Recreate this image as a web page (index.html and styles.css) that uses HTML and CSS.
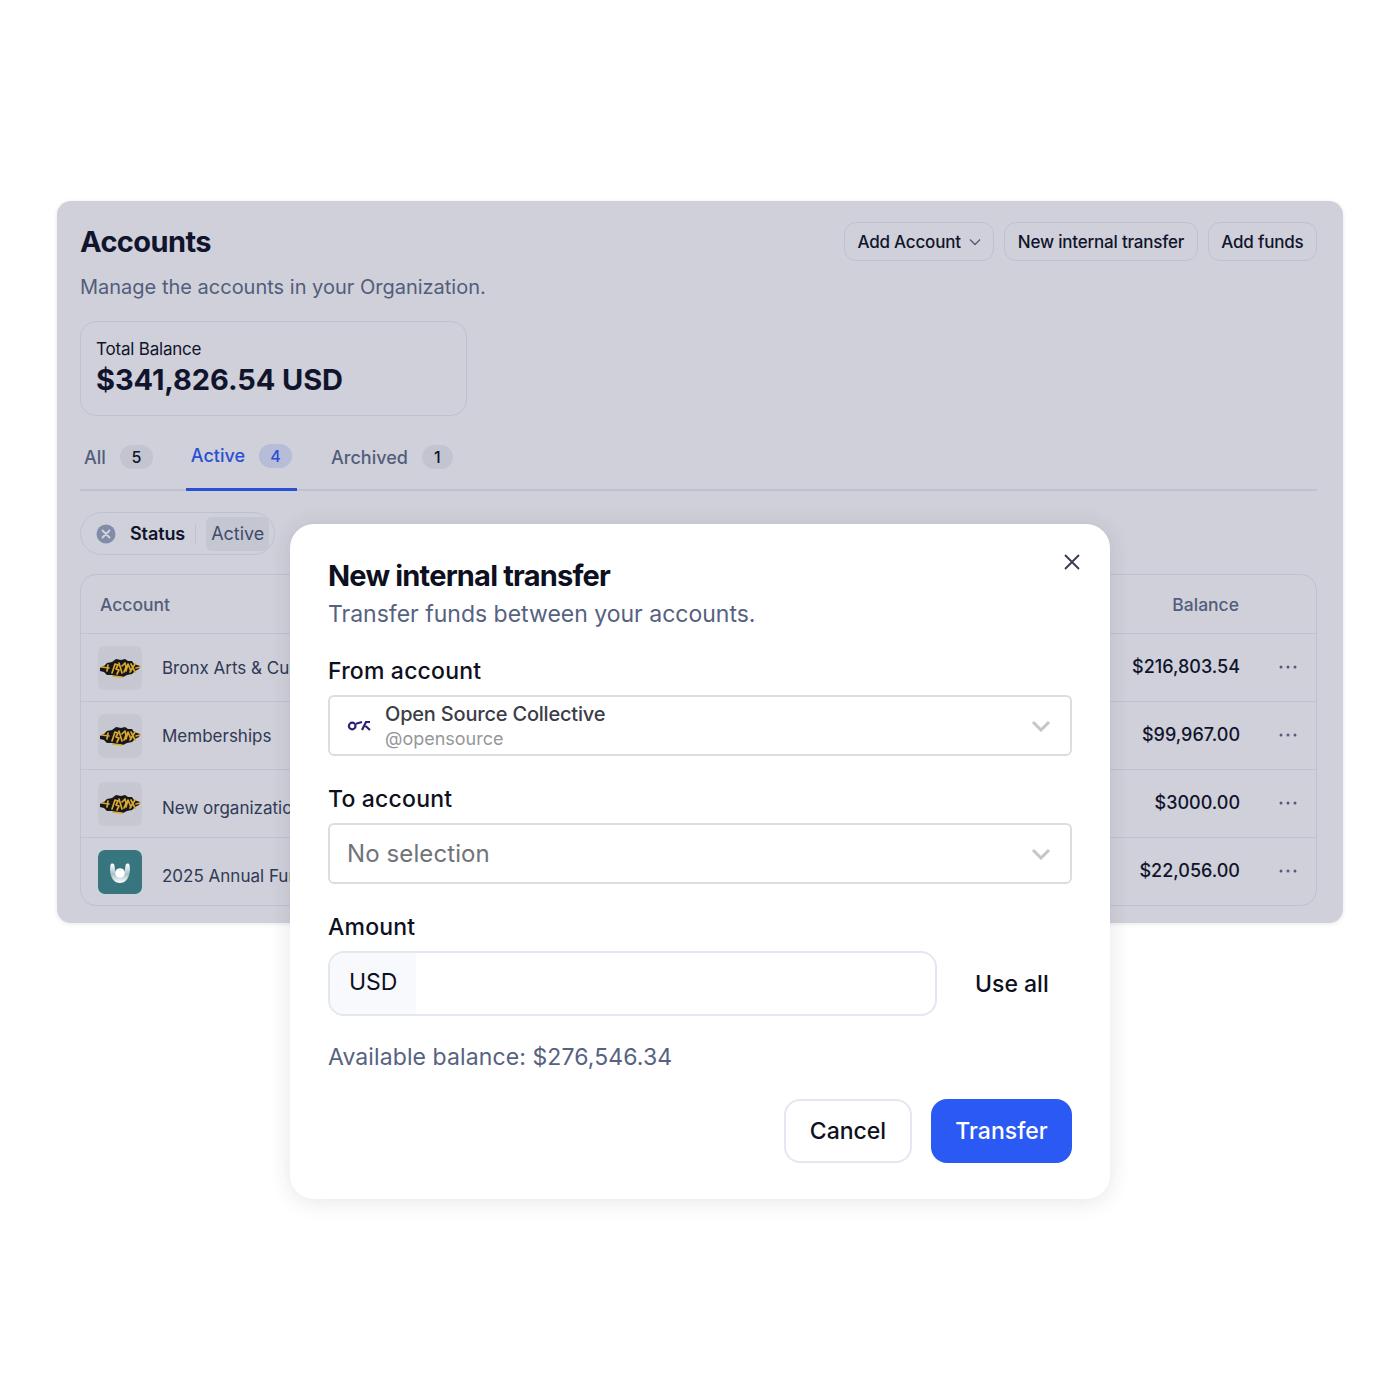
FILE: index.html
```html
<!DOCTYPE html>
<html lang="en">
<head>
    <meta charset="UTF-8">
    <title>New internal transfer</title>
    <link rel="stylesheet" href="styles.css">
</head>
<body>
    <svg class="defs" width="0" height="0">
        <defs>
            <linearGradient id="fade" x1="0" y1="0" x2="0" y2="1">
                <stop offset="0" stop-color="#ffffff"/>
                <stop offset="0.55" stop-color="#a9c3c8"/>
                <stop offset="1" stop-color="#ffffff"/>
            </linearGradient>
            <symbol id="bronx" viewBox="0 0 44 44">
                <path d="M2 22l4-2 3-3 5-1 4-3 5 1 4-1 3 2 4 0 2 3 6 2-1 3-4 2-3 3-5 1-4 2-6 0-5-2-5 0-3-3-4-1z" fill="#17161b"/>
                <path d="M4 21l7 1M10 19l-1 6M14 27l3-9 3 1-2 4 3 1-2 4M21 17l3 10M24 20l3-3 1 4-2 5M28 25l2-7 3 7M33 18l4 8M37 18l-5 8M38 22l4-1M15 30l9 1" fill="none" stroke="#d9a82e" stroke-width="1.7" stroke-linecap="round" stroke-linejoin="round"/>
            </symbol>
            <symbol id="dots" viewBox="0 0 18 4">
                <circle cx="2" cy="2" r="1.5"/>
                <circle cx="9" cy="2" r="1.5"/>
                <circle cx="16" cy="2" r="1.5"/>
            </symbol>
        </defs>
    </svg>

    <main class="panel">
        <header class="top">
            <h1>Accounts</h1>
            <div class="actions">
                <button class="btn">Add Account
                    <svg class="btn-chev" viewBox="0 0 12 8"><path d="M1 1.5l5 5 5-5"/></svg>
                </button>
                <button class="btn">New internal transfer</button>
                <button class="btn">Add funds</button>
            </div>
        </header>
        <p class="lead">Manage the accounts in your Organization.</p>

        <section class="total">
            <div class="total-label">Total Balance</div>
            <div class="total-value">$341,826.54 USD</div>
        </section>

        <nav class="tabs">
            <a class="tab tab-all">All <span class="count">5</span></a>
            <a class="tab tab-active">Active <span class="count">4</span></a>
            <a class="tab tab-archived">Archived <span class="count">1</span></a>
        </nav>

        <div class="filter">
            <svg class="filter-x" viewBox="0 0 20 20">
                <circle cx="10" cy="10" r="9.5" fill="#818ca8"/>
                <path d="M6.5 6.5l7 7M13.5 6.5l-7 7" stroke="#d3d5de" stroke-width="1.8" stroke-linecap="round"/>
            </svg>
            <span class="filter-name">Status</span>
            <span class="filter-sep"></span>
            <span class="filter-value">Active</span>
        </div>

        <section class="table">
            <div class="row row-head">
                <span>Account</span>
                <span class="head-balance">Balance</span>
            </div>
            <div class="row">
                <svg class="logo"><use href="#bronx"/></svg>
                <span class="name">Bronx Arts &amp; Culture</span>
                <span class="amount">$216,803.54</span>
                <svg class="more"><use href="#dots"/></svg>
            </div>
            <div class="row">
                <svg class="logo"><use href="#bronx"/></svg>
                <span class="name">Memberships</span>
                <span class="amount">$99,967.00</span>
                <svg class="more"><use href="#dots"/></svg>
            </div>
            <div class="row">
                <svg class="logo"><use href="#bronx"/></svg>
                <span class="name name-low">New organization</span>
                <span class="amount">$3000.00</span>
                <svg class="more"><use href="#dots"/></svg>
            </div>
            <div class="row">
                <svg class="logo logo-teal" viewBox="0 0 44 44">
                    <path d="M12.5 15c-1.500 7 1 18 9.500 18s11-11 9.500-18c-.5-2-3.500-2-4 .5-.5 3-.5 10-5.500 10s-5-7-5.500-10c-.5-2.500-3.500-2.500-4-.5z" fill="url(#fade)"/>
                    <circle cx="22" cy="23" r="4.800" fill="#fff"/>
                </svg>
                <span class="name name-low">2025 Annual Fund</span>
                <span class="amount">$22,056.00</span>
                <svg class="more"><use href="#dots"/></svg>
            </div>
        </section>
    </main>

    <div class="modal">
        <button class="close" aria-label="Close">
            <svg viewBox="0 0 16 16"><path d="M1 1l14 14M15 1L1 15"/></svg>
        </button>
        <h2>New internal transfer</h2>
        <p class="sub">Transfer funds between your accounts.</p>

        <label class="field-label">From account</label>
        <div class="select">
            <svg class="osc" viewBox="0 0 24 12">
                <circle cx="5.200" cy="6" r="3.300"/>
                <path d="M9 3.800l6-1.800M15 10l4-8 4 0M18.500 6l4.500 4"/>
            </svg>
            <div class="select-text">
                <div class="select-name">Open Source Collective</div>
                <div class="select-slug">@opensource</div>
            </div>
            <svg class="chev" viewBox="0 0 20 12"><path d="M2 2l8 8 8-8"/></svg>
        </div>

        <label class="field-label">To account</label>
        <div class="select">
            <span class="placeholder">No selection</span>
            <svg class="chev" viewBox="0 0 20 12"><path d="M2 2l8 8 8-8"/></svg>
        </div>

        <label class="field-label">Amount</label>
        <div class="amount-row">
            <div class="amount-input">
                <span class="currency">USD</span>
            </div>
            <button class="use-all">Use all</button>
        </div>

        <p class="available">Available balance: $276,546.34</p>

        <div class="footer">
            <button class="cancel">Cancel</button>
            <button class="transfer">Transfer</button>
        </div>
    </div>
</body>
</html>
```

FILE: styles.css
```css
* {
    box-sizing: border-box;
}

body {
    margin: 0;
    padding: 201px 57px 0;
    min-height: 1400px;
    background: #fff;
    font-family: Inter, "Liberation Sans", sans-serif;
    color: #10142c;
    position: relative;
}

.defs {
    position: absolute;
}

button {
    font-family: inherit;
}

.panel {
    height: 722px;
    padding: 21px 26px 0 23px;
    background: #cfd0d9;
    border-radius: 14px;
    box-shadow: 0 1px 4px rgba(60, 60, 90, 0.12);
}

.top {
    display: flex;
    justify-content: space-between;
    align-items: center;
}

h1 {
    margin: 0;
    font-size: 29px;
    font-weight: 700;
    letter-spacing: -0.6px;
    color: #10142c;
}

.actions {
    display: flex;
    gap: 10px;
}

.btn {
    height: 39px;
    padding: 0 12.500px;
    display: flex;
    align-items: center;
    gap: 8px;
    background: none;
    border: 1px solid #bfc1d0;
    border-radius: 12px;
    font-size: 17px;
    font-weight: 500;
    letter-spacing: -0.2px;
    color: #10142c;
}

.btn-chev {
    width: 12px;
    height: 8px;
    fill: none;
    stroke: #545d78;
    stroke-width: 1.4;
}

.lead {
    margin: 13px 0 0;
    font-size: 20px;
    line-height: 26px;
    color: #535d7c;
}

.total {
    width: 387px;
    height: 95px;
    margin-top: 21px;
    padding: 17px 15px 0;
    border: 1px solid #bfc1d0;
    border-radius: 16px;
}

.total-label {
    font-size: 17px;
    line-height: 20px;
    letter-spacing: -0.2px;
    color: #10142c;
}

.total-value {
    margin-top: 3px;
    font-size: 29px;
    line-height: 36px;
    font-weight: 700;
    letter-spacing: -0.1px;
}

.tabs {
    display: flex;
    margin-top: 20px;
    height: 55px;
    border-bottom: 2px solid #bfc1d0;
}

.tab {
    display: flex;
    align-items: center;
    gap: 14px;
    height: 55px;
    padding: 0 5px 13px;
    font-size: 18px;
    font-weight: 500;
    color: #535d7c;
}

.tab-all {
    margin-right: 28px;
    padding-left: 4px;
}

.tab-active {
    margin-right: 29px;
    color: #2a4fd2;
    border-bottom: 3px solid #2a4fd2;
}

.count {
    min-width: 33px;
    height: 24px;
    padding: 0 10px;
    display: flex;
    align-items: center;
    justify-content: center;
    border-radius: 12px;
    background: #c2c4d0;
    font-size: 16px;
    color: #10142c;
}

.tab-active .count {
    background: #b7bcd9;
    color: #2a4fd2;
}

.tab-archived .count {
    min-width: 31px;
}

.filter {
    display: inline-flex;
    align-items: center;
    height: 43px;
    margin-top: 21px;
    padding: 0 5px 0 15px;
    border: 1px solid #bfc1d0;
    border-radius: 22px;
}

.filter-x {
    width: 20px;
    height: 20px;
    margin-right: 14px;
}

.filter-name {
    font-size: 18px;
    font-weight: 600;
    letter-spacing: -0.1px;
}

.filter-sep {
    width: 1px;
    height: 20px;
    margin: 0 10px;
    background: #bfc1d0;
}

.filter-value {
    height: 34px;
    padding: 0 5px;
    display: flex;
    align-items: center;
    background: #c4c6d2;
    border-radius: 6px;
    font-size: 18px;
    color: #414b6a;
}

.table {
    margin-top: 19px;
    height: 332px;
    border: 1px solid #bfc1d0;
    border-radius: 16px;
}

.row {
    display: flex;
    align-items: center;
    height: 68px;
    padding: 0 19px 0 17px;
    border-top: 1px solid #bfc2d3;
}

.row-head {
    height: 58px;
    padding: 0 77px 0 19px;
    border-top: none;
    justify-content: space-between;
    font-size: 17.500px;
    font-weight: 500;
    color: #535d7c;
}

.logo {
    width: 44px;
    height: 44px;
    margin-right: 20px;
    background: #c6c7d1;
    border-radius: 7px;
}

.logo-teal {
    background: #37757f;
}

.name {
    font-size: 17px;
    color: #303956;
    white-space: nowrap;
}

.name-low {
    transform: translateY(4px);
}

.amount {
    margin-left: auto;
    font-size: 18px;
    font-weight: 500;
    color: #10142c;
    transform: translateY(-1px);
}

.more {
    width: 18px;
    height: 4px;
    margin-left: 39px;
    fill: #545d78;
    transform: translateY(-1px);
}

.modal {
    position: absolute;
    left: 290px;
    top: 524px;
    width: 820px;
    height: 675px;
    padding: 33px 38px 0;
    background: #fff;
    border-radius: 24px;
    box-shadow: 0 2px 22px rgba(40, 40, 70, 0.12);
}

.close {
    position: absolute;
    right: 30px;
    top: 30px;
    width: 16px;
    height: 16px;
    padding: 0;
    border: none;
    background: none;
}

.close svg {
    display: block;
    width: 16px;
    height: 16px;
    fill: none;
    stroke: #343b4e;
    stroke-width: 1.800;
}

h2 {
    margin: 0;
    font-size: 29px;
    line-height: 38px;
    font-weight: 700;
    letter-spacing: -0.8px;
    color: #0d1020;
}

.sub {
    margin: 4px 0 0;
    font-size: 23px;
    line-height: 30px;
    color: #56627f;
}

.field-label {
    display: block;
    margin-top: 28px;
    font-size: 23px;
    line-height: 28px;
    font-weight: 500;
    letter-spacing: 0.2px;
    color: #0d1020;
}

.select {
    display: flex;
    align-items: center;
    height: 61px;
    margin-top: 10px;
    padding: 0 19px 0 17px;
    border: 2px solid #dcdde3;
    border-radius: 6px;
}

.select + .field-label {
    margin-top: 29px;
}

.osc {
    width: 24px;
    height: 12px;
    margin-right: 14px;
    fill: none;
    stroke: #2b2170;
    stroke-width: 2.200;
}

.select-name {
    font-size: 20px;
    line-height: 26px;
    font-weight: 500;
    letter-spacing: -0.2px;
    color: #3a3d46;
}

.select-slug {
    font-size: 18px;
    line-height: 24px;
    color: #969799;
}

.chev {
    width: 20px;
    height: 12px;
    margin-left: auto;
    fill: none;
    stroke: #c6c6c8;
    stroke-width: 3;
}

.placeholder {
    font-size: 24px;
    letter-spacing: 0.1px;
    color: #717378;
}

.amount-row {
    display: flex;
    align-items: center;
    margin-top: 10px;
}

.amount-input {
    width: 609px;
    height: 65px;
    border: 2px solid #e3e7f0;
    border-radius: 16px;
    overflow: hidden;
}

.currency {
    display: flex;
    align-items: center;
    width: 86px;
    height: 100%;
    padding: 0 0 4px 19px;
    background: #f8f9fc;
    font-size: 23px;
    color: #0d1020;
}

.use-all {
    margin-left: 38px;
    padding: 0;
    border: none;
    background: none;
    font-size: 23px;
    font-weight: 500;
    color: #0d1020;
}

.available {
    margin: 25px 0 0;
    font-size: 23px;
    line-height: 32px;
    letter-spacing: 0.1px;
    color: #56627f;
}

.footer {
    display: flex;
    justify-content: flex-end;
    gap: 19px;
    margin-top: 26px;
}

.cancel,
.transfer {
    height: 64px;
    border-radius: 16px;
    font-size: 23px;
    font-weight: 500;
}

.cancel {
    width: 128px;
    border: 2px solid #e3e7f0;
    background: #fff;
    color: #0d1020;
}

.transfer {
    width: 141px;
    border: none;
    background: #2b59f3;
    color: #fff;
}
```
